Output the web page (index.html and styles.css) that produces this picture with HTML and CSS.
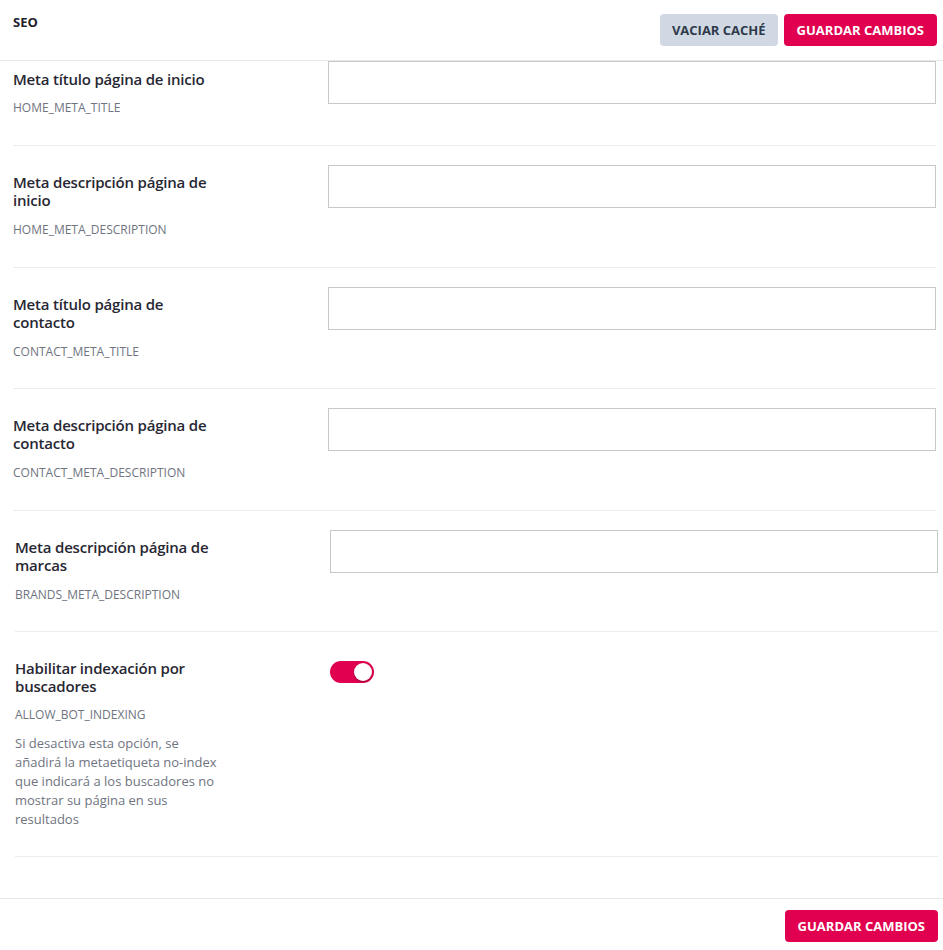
FILE: index.html
```html
<!DOCTYPE html>
<html lang="es">
<head>
<meta charset="utf-8">
<link rel="stylesheet" href="styles.css">
</head>
<body>
<div class="page">
  <header class="topbar">
    <h1 class="title">SEO</h1>
    <div class="actions">
      <button class="btn btn-grey">VACIAR CACHÉ</button>
      <button class="btn btn-pink">GUARDAR CAMBIOS</button>
    </div>
  </header>

  <main class="content">
    <div class="row first">
      <div class="label-col">
        <div class="label">Meta título página de inicio</div>
        <div class="key">HOME_META_TITLE</div>
      </div>
      <div class="field-col"><input class="input" type="text"></div>
    </div>
    <div class="row">
      <div class="label-col">
        <div class="label">Meta descripción página de inicio</div>
        <div class="key">HOME_META_DESCRIPTION</div>
      </div>
      <div class="field-col"><input class="input" type="text"></div>
    </div>
    <div class="row">
      <div class="label-col">
        <div class="label">Meta título página de contacto</div>
        <div class="key">CONTACT_META_TITLE</div>
      </div>
      <div class="field-col"><input class="input" type="text"></div>
    </div>
    <div class="row">
      <div class="label-col">
        <div class="label">Meta descripción página de contacto</div>
        <div class="key">CONTACT_META_DESCRIPTION</div>
      </div>
      <div class="field-col"><input class="input" type="text"></div>
    </div>
    <div class="row shifted">
      <div class="label-col">
        <div class="label">Meta descripción página de marcas</div>
        <div class="key">BRANDS_META_DESCRIPTION</div>
      </div>
      <div class="field-col"><input class="input" type="text"></div>
    </div>
    <div class="row shifted toggle-row">
      <div class="label-col">
        <div class="label">Habilitar indexación por buscadores</div>
        <div class="key">ALLOW_BOT_INDEXING</div>
        <p class="help">Si desactiva esta opción, se añadirá la metaetiqueta no-index que indicará a los buscadores no mostrar su página en sus resultados</p>
      </div>
      <div class="field-col">
        <span class="switch"><span class="knob"></span></span>
      </div>
    </div>
  </main>

  <footer class="footer">
    <button class="btn btn-pink">GUARDAR CAMBIOS</button>
  </footer>
</div>
</body>
</html>
```
FILE: styles.css
```css
* { box-sizing: border-box; }
html, body { margin: 0; padding: 0; background: #fff; }
body { font-family: "Open Sans", "Liberation Sans", sans-serif; color: #2b2b36; }

.page { width: 943px; }

.topbar {
  display: flex;
  justify-content: space-between;
  align-items: flex-start;
  height: 61px;
  padding: 14px 6px 0 13px;
  border-bottom: 1px solid #e8e8e8;
}
.title {
  margin: -1px 0 0;
  font-size: 13px;
  font-weight: 700;
  color: #22222c;
}
.actions { display: flex; gap: 6px; }

.btn {
  font-family: "Open Sans", "Liberation Sans", sans-serif;
  font-size: 13px;
  font-weight: 700;
  border: none;
  border-radius: 4px;
  height: 32px;
  padding: 0 12px;
  cursor: pointer;
}
.btn-grey { background: #d0d9e3; color: #2f3a4b; }
.btn-pink { background: #e0004f; color: #fff; padding: 0 13px; }

.content { padding: 0 7px 0 13px; }

.row {
  display: flex;
  padding: 19px 0 0;
  border-bottom: 1px solid #ececec;
  height: 121.5px;
}
.row.first { padding-top: 0; height: 85px; }
.row.first .label-col { padding-top: 9px; }
.row.first .key { margin-top: 12px; }
.row.shifted { margin-left: 2px; margin-right: -2px; }

.label-col { width: 315px; flex: none; padding-top: 8px; }
.label {
  max-width: 215px;
  font-size: 15px;
  font-weight: 600;
  line-height: 18px;
  letter-spacing: -0.2px;
  color: #272733;
}
.key {
  margin-top: 13px;
  font-size: 12px;
  line-height: 16px;
  color: #6f7480;
}
.help {
  margin: 11px 0 0;
  max-width: 208px;
  font-size: 13px;
  line-height: 19px;
  color: #6f7480;
}
.field-col { flex: 1; }
.input {
  display: block;
  width: 100%;
  height: 43px;
  border: 1px solid #c8c8c8;
  border-radius: 0;
  background: #fff;
  margin: 0;
}

.toggle-row { height: 225px; padding-top: 26px; }
.toggle-row .label-col { padding-top: 1px; }
.toggle-row .key { margin-top: 12px; }
.switch {
  display: inline-block;
  position: relative;
  margin-top: 3px;
  width: 44px;
  height: 22px;
  border-radius: 11px;
  background: #e0004f;
}
.knob {
  position: absolute;
  top: 2px;
  right: 2px;
  width: 18px;
  height: 18px;
  border-radius: 50%;
  background: #fff;
  box-shadow: 0 1px 2px rgba(0,0,0,0.3);
}

.footer {
  margin-top: 41px;
  border-top: 1px solid #e8e8e8;
  display: flex;
  justify-content: flex-end;
  padding: 11px 5px 0 0;
}
```
